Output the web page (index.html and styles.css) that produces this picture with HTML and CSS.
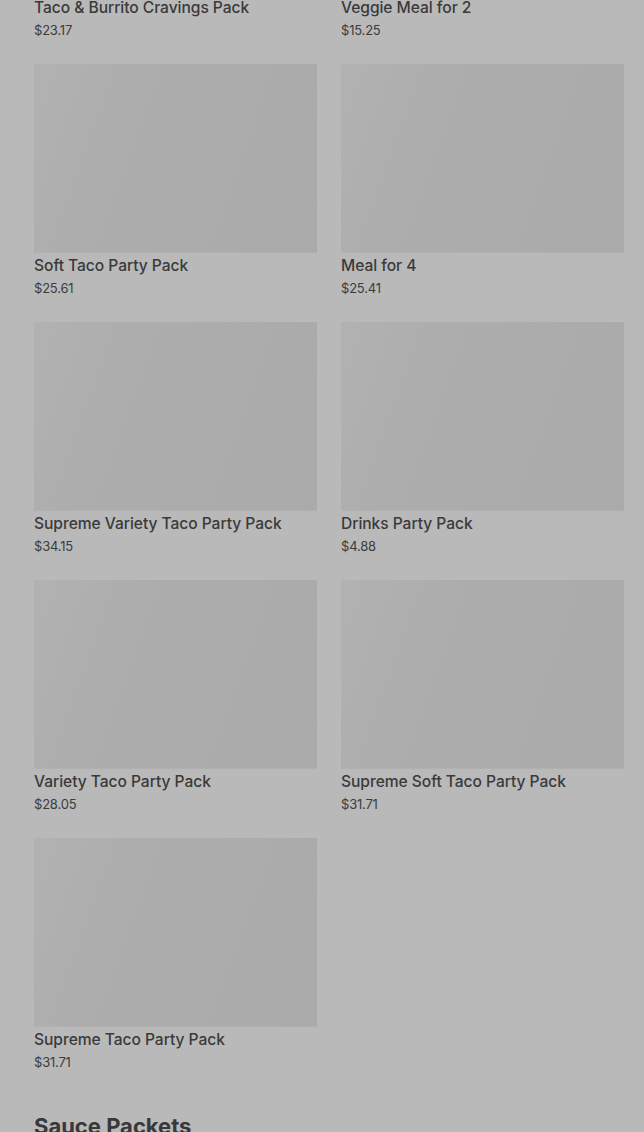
FILE: index.html
```html
<!DOCTYPE html>
<html lang="en">
<head>
<meta charset="utf-8">
<title>Party Packs</title>
<link rel="stylesheet" href="styles.css">
</head>
<body>
<main class="page">
  <section class="grid">
    <a class="card"><div class="thumb"></div><h3 class="name">Taco &amp; Burrito Cravings Pack</h3><p class="price">$23.17</p></a>
    <a class="card"><div class="thumb"></div><h3 class="name">Veggie Meal for 2</h3><p class="price">$15.25</p></a>
    <a class="card"><div class="thumb"></div><h3 class="name">Soft Taco Party Pack</h3><p class="price">$25.61</p></a>
    <a class="card"><div class="thumb"></div><h3 class="name">Meal for 4</h3><p class="price">$25.41</p></a>
    <a class="card"><div class="thumb"></div><h3 class="name">Supreme Variety Taco Party Pack</h3><p class="price">$34.15</p></a>
    <a class="card"><div class="thumb"></div><h3 class="name">Drinks Party Pack</h3><p class="price">$4.88</p></a>
    <a class="card"><div class="thumb"></div><h3 class="name">Variety Taco Party Pack</h3><p class="price">$28.05</p></a>
    <a class="card"><div class="thumb"></div><h3 class="name">Supreme Soft Taco Party Pack</h3><p class="price">$31.71</p></a>
    <a class="card"><div class="thumb"></div><h3 class="name">Supreme Taco Party Pack</h3><p class="price">$31.71</p></a>
  </section>
  <h2 class="section-title">Sauce Packets</h2>
</main>
</body>
</html>
```

FILE: styles.css
```css
html, body {
  margin: 0;
  padding: 0;
  background: #b9b9b9;
  overflow: hidden;
}
body {
  font-family: Inter, Roboto, "Liberation Sans", sans-serif;
  color: #363636;
}
.page {
  margin-top: -194px;
  padding: 0 20px 0 34px;
}
.grid {
  display: grid;
  grid-template-columns: 1fr 1fr;
  column-gap: 24px;
  row-gap: 24px;
}
.card {
  display: flex;
  flex-direction: column;
  text-decoration: none;
  color: inherit;
}
.thumb {
  height: 188px;
  background: linear-gradient(110deg, #b2b2b2 0%, #adadad 30%, #aaaaaa 100%);
  box-shadow: 0 1px 1px rgba(0,0,0,0.04);
}
.name {
  margin: 3px 0 0;
  font-size: 15.6px;
  line-height: 22px;
  font-weight: 500;
  letter-spacing: -0.05px;
  color: #3a3a3a;
}
.price {
  margin: 2px 0 0;
  font-size: 13px;
  line-height: 19px;
  letter-spacing: -0.2px;
  color: #3c3c3c;
}
.section-title {
  margin: 40px 0 0;
  font-size: 22px;
  line-height: 28px;
  font-weight: 700;
  color: #383838;
}
```
